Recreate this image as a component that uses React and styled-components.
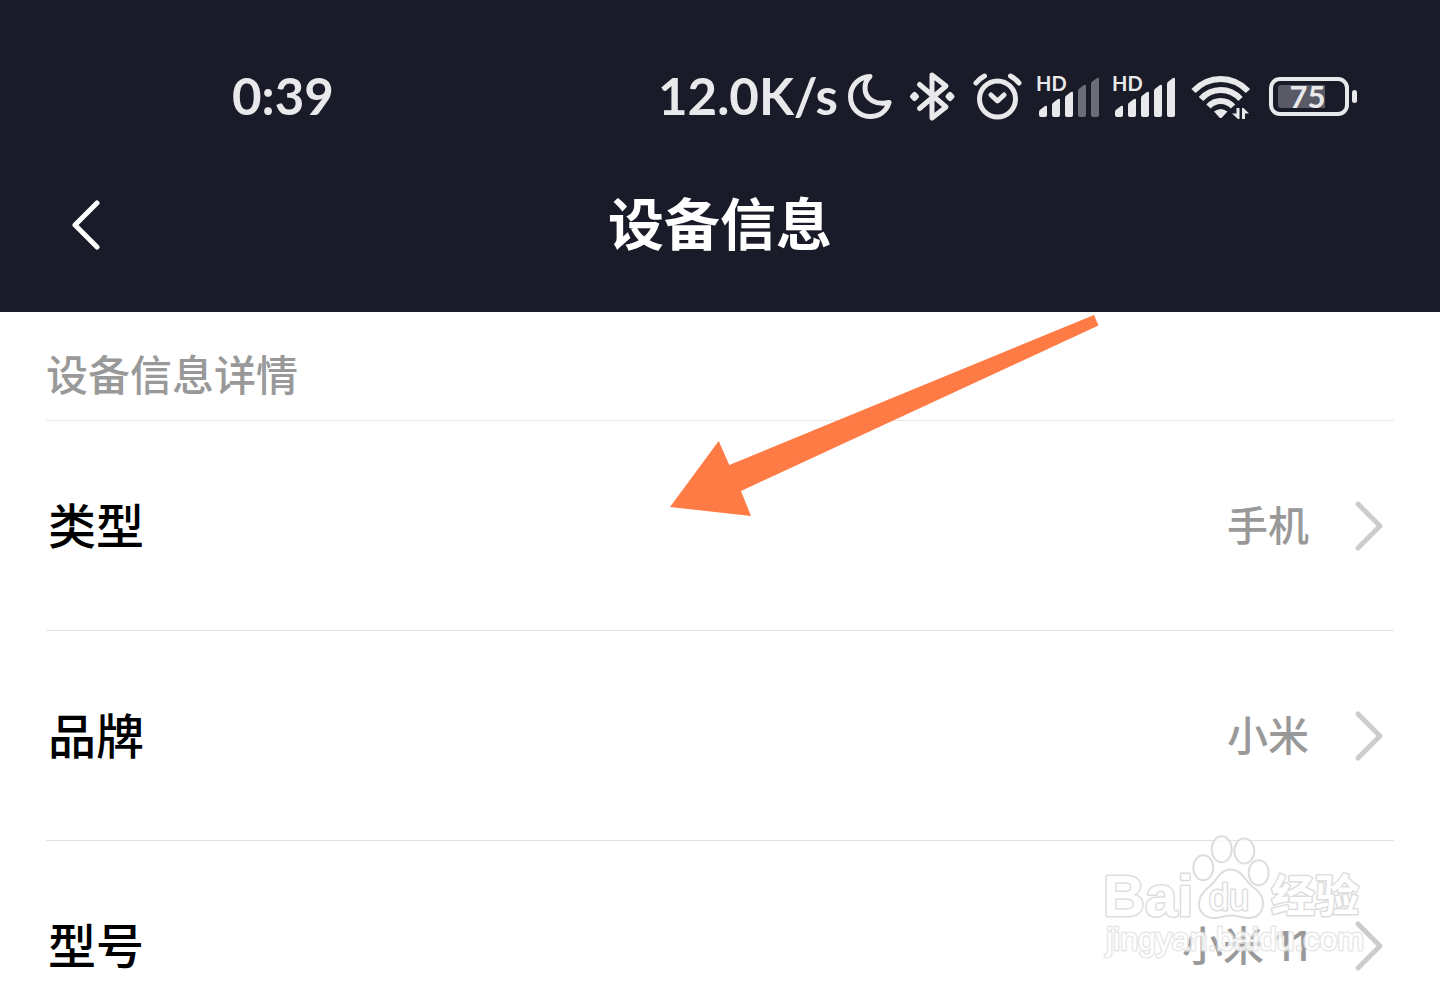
import React from "react";
import styled, { createGlobalStyle } from "styled-components";

const ROWS = [
  { label: "类型", value: "手机" },
  { label: "品牌", value: "小米" },
  { label: "型号", value: "小米 11" },
];

const BARS = [
  { x: 3, top: 38 },
  { x: 16, top: 31 },
  { x: 29, top: 24 },
  { x: 42, top: 17 },
  { x: 55, top: 10 },
];

const GlobalStyle = createGlobalStyle`
  html {
    scrollbar-width: none;
  }
  body {
    margin: 0;
    background: #ffffff;
    font-family: "Noto Sans CJK SC", sans-serif;
  }
  * {
    box-sizing: border-box;
  }
`;

const Page = styled.div`
  position: relative;
  min-height: 100vh;
  overflow: hidden;
`;

const Header = styled.header`
  background: #1a1b29;
  color: #ffffff;
  padding-top: 67px;
`;

const StatusBar = styled.div`
  display: flex;
  justify-content: space-between;
  align-items: center;
  height: 60px;
  padding: 0 82px 0 232px;
  color: #e9e9eb;
  font-family: Lato, "Noto Sans CJK SC", sans-serif;
  font-size: 51px;
  line-height: 56px;
  font-weight: 700;
`;

const Time = styled.time`
  padding-bottom: 2px;
`;

const StatusIcons = styled.div`
  display: flex;
  align-items: center;
  gap: 12px;
  svg {
    display: block;
    flex: none;
  }
`;

const Speed = styled.span`
  margin-right: -4px;
  padding-bottom: 2px;
`;

const NavBar = styled.div`
  display: grid;
  grid-template-columns: 100px 1fr 100px;
  align-items: center;
  height: 185px;
  padding: 10px 46px 0;
  align-content: start;
`;

const BackButton = styled.button`
  display: flex;
  align-items: center;
  height: 176px;
  padding: 0 24px;
  border: none;
  background: none;
  color: inherit;
  cursor: pointer;
`;

const Title = styled.h1`
  margin: 0;
  padding-bottom: 8px;
  text-align: center;
  font-size: 56px;
  line-height: 80px;
  font-weight: 700;
`;

const Content = styled.main`
  padding: 0 46px;
`;

const SectionTitle = styled.h2`
  margin: 0;
  padding: 31px 0 17px;
  border-bottom: 1px solid #e8e8e8;
  color: #999999;
  font-size: 42px;
  line-height: 60px;
  font-weight: 500;
`;

const Row = styled.button`
  display: flex;
  align-items: center;
  width: 100%;
  height: 210px;
  padding: 0 10px 0 2px;
  border: none;
  border-bottom: 1px solid #e2e2e2;
  background: none;
  font-family: inherit;
  font-weight: 500;
  text-align: left;
  cursor: pointer;
`;

const Label = styled.span`
  flex: 1;
  padding-bottom: 6px;
  color: #000000;
  font-size: 48px;
  line-height: 64px;
`;

const Value = styled.span`
  margin-right: 45px;
  color: #999999;
  font-family: Inter, "Noto Sans CJK SC", sans-serif;
  font-size: 41px;
  line-height: 64px;
`;

const Arrow = styled.svg`
  position: absolute;
  top: 312px;
  left: 50%;
  margin-left: -54px;
  pointer-events: none;
`;

const Watermark = styled.svg`
  position: absolute;
  top: 830px;
  right: 70px;
  pointer-events: none;
  fill: #ffffff;
  stroke: #d8d8d8;
  stroke-width: 2px;
  opacity: 0.85;
  text {
    paint-order: stroke;
    stroke-width: 3px;
    stroke-linejoin: round;
  }
`;

const Moon = () => (
  <svg width="49" height="60" fill="none" stroke="currentColor" strokeWidth="5" strokeLinejoin="round">
    <path d="M24 9.5C13 10 4.5 18.500 4.500 29.500C4.500 41 13 49.500 24 49.500C33.500 49.500 40.500 44 43 35.500C31 38.500 19 33 19 21C19 16.500 20.500 12.500 24 9.500Z" />
  </svg>
);

const Bluetooth = () => (
  <svg width="53" height="60" fill="none" stroke="currentColor" strokeWidth="5" strokeLinecap="round" strokeLinejoin="round">
    <path d="M12.500 17.500L39 40L25 51V8L39 19L12.500 41.500" />
    <path d="M7.500 27.500L9.500 29.500L7.500 31.500L5.500 29.500ZM43 27.500L45 29.500L43 31.500L41 29.500Z" />
  </svg>
);

const Alarm = () => (
  <svg width="52" height="60" fill="none" stroke="currentColor" strokeWidth="5" strokeLinecap="round" strokeLinejoin="round">
    <circle cx="25.500" cy="32" r="18" />
    <path d="M19 28L25.500 34L32 28" />
    <path d="M4 16Q7 12 12.500 9M38.500 9Q44 12 47 16" />
  </svg>
);

const Signal = ({ level }) => (
  <svg width="64" height="60" fill="currentColor">
    <text x="0" y="24" fontSize="20">
      HD
    </text>
    {BARS.map(({ x, top }, index) => (
      <path
        key={x}
        opacity={index < level ? 1 : 0.4}
        d={`M${x} ${top + 7}Q${x} ${top + 5} ${x + 2} ${top + 4}L${x + 6} ${top + 1}Q${x + 8} ${top} ${x + 8} ${top + 2}V48Q${x + 8} 50 ${x + 6} 50H${x + 2}Q${x} 50 ${x} 48Z`}
      />
    ))}
  </svg>
);

const Wifi = () => (
  <svg width="65" height="60" fill="none" stroke="currentColor" strokeWidth="6">
    <path d="M5.500 24Q17 12 32.700 12T60 24" />
    <path d="M13 32Q21 23 32.700 23T52.500 32" />
    <path d="M20.500 39.500Q25.500 34 32.700 34T45 39.500" />
    <path d="M26 44.500Q32.700 39.500 39.500 44.500L34 50.500Q32.700 51.500 31.400 50.500Z" fill="currentColor" stroke="none" />
    <path d="M51.500 41V52H50L44 46.500H48.500V41ZM54 52V41H55.500L61 46.500H57V52Z" fill="currentColor" stroke="none" />
  </svg>
);

const Battery = () => (
  <svg width="93" height="60" fill="none">
    <rect x="6" y="12" width="76" height="35" rx="9" stroke="currentColor" strokeWidth="4" />
    <path d="M16 18H60V41H16Q13 41 13 38V21Q13 18 16 18Z" fill="#5a5a66" />
    <rect x="87" y="23" width="5" height="13" rx="2.500" fill="currentColor" />
    <text x="42.500" y="41" fontSize="31" textAnchor="middle" fill="currentColor">
      75
    </text>
  </svg>
);

const Chevron = ({ back }) => (
  <svg width="30" height="52" fill="none" stroke={back ? "#ffffff" : "#cccccc"} strokeWidth="5" strokeLinecap="round" strokeLinejoin="round">
    <path d={back ? "M27 4L5 26L27 48" : "M4 4L26 26L4 48"} />
  </svg>
);

const App = () => {
  return (
    <Page>
      <GlobalStyle />
      <Header>
        <StatusBar>
          <Time>0:39</Time>
          <StatusIcons>
            <Speed>12.0K/s</Speed>
            <Moon />
            <Bluetooth />
            <Alarm />
            <Signal level={3} />
            <Signal level={5} />
            <Wifi />
            <Battery />
          </StatusIcons>
        </StatusBar>
        <NavBar>
          <BackButton aria-label="返回">
            <Chevron back />
          </BackButton>
          <Title>设备信息</Title>
        </NavBar>
      </Header>
      <Content>
        <SectionTitle>设备信息详情</SectionTitle>
        {ROWS.map(({ label, value }) => (
          <Row key={label}>
            <Label>{label}</Label>
            <Value>{value}</Value>
            <Chevron />
          </Row>
        ))}
      </Content>
      <Arrow width="440" height="210" fill="#ff7b45">
        <path d="M4 195L52.700 129L63.300 153L428 3L432.500 13.500L75 179L85 204Z" />
      </Arrow>
      <Watermark width="270" height="135">
        <ellipse cx="121.700" cy="19.300" rx="10" ry="13" />
        <ellipse cx="144.300" cy="21" rx="10" ry="12.500" />
        <ellipse cx="103.300" cy="37.700" rx="10" ry="12.500" />
        <ellipse cx="158.700" cy="42.700" rx="10" ry="12.500" />
        <path d="M130.700 39.500C142 39.500 146 52 153 57C160 62 164 67 163 75C162 84 156 88.500 148 88C141 87.500 137 85.500 130.700 85.500C124 85.500 121 88 114 88C105 88 99 82 99 74C99 66 104 61 110 56C117 50 120 39.500 130.700 39.500Z" />
        <text x="3" y="86" fontSize="58" fontWeight="700" fontFamily="Liberation Sans, sans-serif">
          Bai
        </text>
        <text x="109" y="80" fontSize="36" fontFamily="Liberation Sans, sans-serif">
          du
        </text>
        <text x="171" y="82" fontSize="44" fontWeight="700" fontFamily="Noto Sans CJK SC, sans-serif">
          经验
        </text>
        <text x="6" y="120" fontSize="32" stroke="#e4e4e4" fontFamily="Liberation Sans, sans-serif">
          jingyan.baidu.com
        </text>
      </Watermark>
    </Page>
  );
};

export default App;
